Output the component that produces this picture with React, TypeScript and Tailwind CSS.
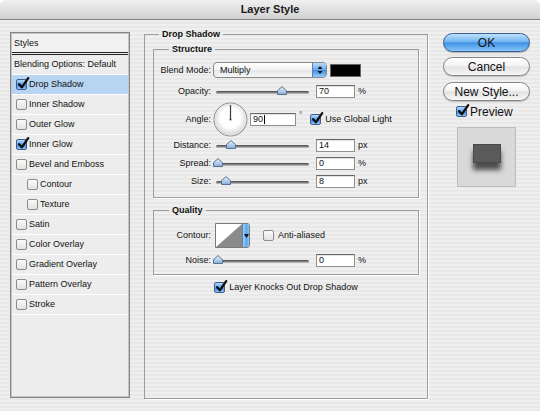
import React from 'react';

function Box({ checked }: { checked?: boolean }) {
  if (checked) {
    return (
      <span className="relative inline-block w-[11px] h-[11px] rounded-[2px] border border-[#3c5f8e] bg-[linear-gradient(#b4d8fa,#5ea4ec_50%,#3b86e3_52%,#8cc6f8)] shrink-0">
        <svg className="absolute left-[0px] top-[-3px]" width="13" height="13" viewBox="0 0 13 13">
          <path d="M2.2 7.2 L4.8 10.3 L11.2 1.2" fill="none" stroke="#0d0d0d" strokeWidth="2.3" strokeLinecap="round" strokeLinejoin="round" />
        </svg>
      </span>
    );
  }
  return <span className="inline-block w-[11px] h-[11px] rounded-[2px] border border-[#8c8c8c] bg-[linear-gradient(#fbfbfb,#e2e2e2)] shrink-0" />;
}

function Slider({ pos }: { pos: number }) {
  return (
    <div className="relative w-[98px] h-[11px] ml-[2px] shrink-0">
      <div className="absolute left-[3px] right-[2px] top-[5px] h-[3px] rounded-full bg-[linear-gradient(#474747,#8a8a8a_60%,#cfcfcf)]" />
      <svg className="absolute top-[0px]" style={{ left: pos }} width="10" height="9" viewBox="0 0 10 9">
        <defs>
          <linearGradient id="thumbg" x1="0" y1="0" x2="0" y2="1">
            <stop offset="0" stopColor="#eef5fd" />
            <stop offset="1" stopColor="#86acd8" />
          </linearGradient>
        </defs>
        <path d="M0.5 8.5 V4.6 L5 0.6 L9.5 4.6 V8.5 Z" fill="url(#thumbg)" stroke="#56708f" strokeWidth="1" />
      </svg>
    </div>
  );
}

function Field({ children, className }: { children?: React.ReactNode; className: string }) {
  return (
    <div className={`h-[13px] bg-white border border-[#8f8f8f] border-t-[#666] shadow-[inset_0_1px_1px_rgba(0,0,0,0.12)] pl-[2px] flex items-center text-[9px] leading-none shrink-0 ${className}`}>
      {children}
    </div>
  );
}

function Label({ children }: { children: React.ReactNode }) {
  return <span className="w-[57px] text-right shrink-0 text-[9px] leading-none">{children}</span>;
}

const items: { label: string; checked?: boolean; selected?: boolean; indent?: boolean }[] = [
  { label: 'Drop Shadow', checked: true, selected: true },
  { label: 'Inner Shadow' },
  { label: 'Outer Glow' },
  { label: 'Inner Glow', checked: true },
  { label: 'Bevel and Emboss' },
  { label: 'Contour', indent: true },
  { label: 'Texture', indent: true },
  { label: 'Satin' },
  { label: 'Color Overlay' },
  { label: 'Gradient Overlay' },
  { label: 'Pattern Overlay' },
  { label: 'Stroke' },
];

function Dial() {
  return (
    <svg width="35" height="35" viewBox="0 0 35 35" className="shrink-0 ml-[2px]">
      <defs>
        <radialGradient id="dialg" cx="0.5" cy="0.45" r="0.55">
          <stop offset="0.55" stopColor="#ffffff" />
          <stop offset="1" stopColor="#cfcfcf" />
        </radialGradient>
      </defs>
      <circle cx="17.5" cy="17.5" r="16.5" fill="url(#dialg)" stroke="#8c8c8c" strokeWidth="1" />
      <circle cx="17.5" cy="17.5" r="15.5" fill="none" stroke="#e8e8e8" strokeWidth="0.8" />
      <line x1="17.5" y1="17.5" x2="17.5" y2="3" stroke="#3a3a3a" strokeWidth="1.2" />
      <circle cx="17.5" cy="17.5" r="1" fill="#3a3a3a" />
    </svg>
  );
}

export default function App() {
  return (
    <div className="w-[540px] h-[411px] bg-white flex flex-col text-[#111] font-['Liberation_Sans',Arial,sans-serif] overflow-hidden">
      {/* Title bar */}
      <div className="h-[20px] shrink-0 rounded-t-[6px] border-b border-[#7f7f7f] bg-[linear-gradient(#efefef,#d2d2d2)] flex items-center justify-center">
        <span className="text-[11px] font-bold leading-none text-[#1a1a1a]">Layer Style</span>
      </div>

      {/* Body */}
      <div className="flex-1 flex items-start bg-[image:repeating-linear-gradient(180deg,#efefef_0px,#efefef_2px,#e8e8e8_2px,#e8e8e8_4px)]">
        {/* Left list */}
        <div className="ml-[10px] mt-[12px] w-[120px] h-[366px] border border-[#858585] bg-[#c4c4c4] p-[1px] shrink-0">
          <div className="h-full bg-[#ededed] flex flex-col">
            <div className="h-[21px] border-b-[3px] border-double border-[#222] bg-[#f1f1f1] flex items-center pl-[2px] text-[9px] leading-none">
              Styles
            </div>
            <div className="h-[20px] border-b border-white flex items-center pl-[2px] text-[9px] leading-none">
              Blending Options: Default
            </div>
            {items.map((it) => (
              <div
                key={it.label}
                className={`h-[20px] border-b border-white flex items-center gap-[2px] text-[9px] leading-none ${it.indent ? 'pl-[15px]' : 'pl-[4px]'} ${it.selected ? 'bg-[#b7d4f3]' : ''}`}
              >
                <Box checked={it.checked} />
                <span>{it.label}</span>
              </div>
            ))}
          </div>
        </div>

        {/* Middle */}
        <fieldset className="ml-[14px] mt-[8px] w-[284px] h-[371px] border border-[#9c9c9c] px-[8px] shrink-0 shadow-[1px_1px_0_0_#ffffff]">
          <legend className="ml-[6px] px-[3px] font-bold text-[9px] leading-[12px]">Drop Shadow</legend>
          <div className="flex flex-col">
            {/* Structure */}
            <fieldset className="mt-[3px] h-[155px] border border-[#9c9c9c] shadow-[1px_1px_0_0_#ffffff]">
              <legend className="ml-[15px] px-[3px] font-bold text-[9px] leading-[12px]">Structure</legend>
              <div className="flex flex-col">
                <div className="mt-[7px] h-[16px] flex items-center">
                  <Label>Blend Mode:</Label>
                  <div className="ml-[2px] w-[114px] h-[16px] rounded-[4px] border border-[#888] bg-[linear-gradient(#ffffff,#f3f3f3_50%,#e6e6e6_52%,#f7f7f7)] flex items-center overflow-hidden shrink-0">
                    <span className="flex-1 pl-[6px] text-[9px] leading-none">Multiply</span>
                    <div className="w-[14px] h-full border-l border-[#5c7ea8] bg-[linear-gradient(#b9dcfb,#64aaee_50%,#3f8ce4_52%,#93cdf9)] flex items-center justify-center">
                      <svg width="6" height="10" viewBox="0 0 6 10">
                        <path d="M0.5 4 L3 1 L5.5 4 Z" fill="#111" />
                        <path d="M0.5 6 L3 9 L5.5 6 Z" fill="#111" />
                      </svg>
                    </div>
                  </div>
                  <div className="ml-[3px] w-[31px] h-[13px] bg-black border border-[#666] shrink-0" />
                </div>

                <div className="mt-[6px] h-[15px] flex items-center">
                  <Label>Opacity:</Label>
                  <Slider pos={64} />
                  <Field className="ml-[5px] w-[39px]">70</Field>
                  <span className="ml-[3px] text-[9px] leading-none">%</span>
                </div>

                <div className="mt-[3px] h-[34px] flex items-center">
                  <Label>Angle:</Label>
                  <Dial />
                  <Field className="ml-[2px] w-[46px]">
                    <span>90</span>
                    <span className="ml-[1px] w-[1px] h-[9px] bg-black" />
                  </Field>
                  <span className="self-start mt-[9px] ml-[3px] text-[8px] leading-none">°</span>
                  <span className="ml-[8px] flex items-center gap-[4px]">
                    <Box checked />
                    <span className="text-[9px] leading-none">Use Global Light</span>
                  </span>
                </div>

                <div className="mt-[3px] h-[13px] flex items-center">
                  <Label>Distance:</Label>
                  <Slider pos={13} />
                  <Field className="ml-[5px] w-[39px]">14</Field>
                  <span className="ml-[3px] text-[9px] leading-none">px</span>
                </div>

                <div className="mt-[5px] h-[13px] flex items-center">
                  <Label>Spread:</Label>
                  <Slider pos={0} />
                  <Field className="ml-[5px] w-[39px]">0</Field>
                  <span className="ml-[3px] text-[9px] leading-none">%</span>
                </div>

                <div className="mt-[5px] h-[13px] flex items-center">
                  <Label>Size:</Label>
                  <Slider pos={8} />
                  <Field className="ml-[5px] w-[39px]">8</Field>
                  <span className="ml-[3px] text-[9px] leading-none">px</span>
                </div>
              </div>
            </fieldset>

            {/* Quality */}
            <fieldset className="mt-[6px] h-[71px] border border-[#9c9c9c] shadow-[1px_1px_0_0_#ffffff]">
              <legend className="ml-[15px] px-[3px] font-bold text-[9px] leading-[12px]">Quality</legend>
              <div className="flex flex-col">
                <div className="mt-[7px] h-[25px] flex items-center">
                  <Label>Contour:</Label>
                  <div className="ml-[4px] w-[35px] h-[25px] border border-[#7a7a7a] rounded-r-[3px] flex overflow-hidden shrink-0">
                    <svg width="26" height="23" viewBox="0 0 26 23" className="bg-white shrink-0">
                      <polygon points="0,23 26,0 26,23" fill="#8a8a8a" />
                    </svg>
                    <div className="flex-1 border-l border-[#5c7ea8] bg-[linear-gradient(90deg,#9fd0fa,#5aa6ee_60%,#8cc8f8)] flex items-center justify-center">
                      <svg width="5" height="4" viewBox="0 0 5 4">
                        <path d="M0 0 L5 0 L2.5 4 Z" fill="#111" />
                      </svg>
                    </div>
                  </div>
                  <span className="ml-[13px] flex items-center gap-[4px]">
                    <Box />
                    <span className="text-[9px] leading-none">Anti-aliased</span>
                  </span>
                </div>
                <div className="mt-[6px] h-[13px] flex items-center">
                  <Label>Noise:</Label>
                  <Slider pos={0} />
                  <Field className="ml-[5px] w-[39px]">0</Field>
                  <span className="ml-[3px] text-[9px] leading-none">%</span>
                </div>
              </div>
            </fieldset>

            <div className="mt-[7px] h-[11px] flex items-center justify-center gap-[4px]">
              <Box checked />
              <span className="text-[9px] leading-none">Layer Knocks Out Drop Shadow</span>
            </div>
          </div>
        </fieldset>

        {/* Right column */}
        <div className="ml-[15px] mt-[13px] w-[87px] flex flex-col shrink-0">
          <div className="h-[19px] rounded-full border border-[#3b5f92] bg-[linear-gradient(#bfe0fc,#72b6f3_45%,#3f90e6_52%,#86c6f9)] shadow-[0_1px_1px_rgba(0,0,0,0.25)] flex items-center justify-center text-[12px] leading-none">
            OK
          </div>
          <div className="mt-[5px] h-[19px] rounded-full border border-[#858585] bg-[linear-gradient(#ffffff,#f4f4f4_45%,#e2e2e2_52%,#f7f7f7)] shadow-[0_1px_1px_rgba(0,0,0,0.2)] flex items-center justify-center text-[12px] leading-none">
            Cancel
          </div>
          <div className="mt-[6px] h-[19px] rounded-full border border-[#858585] bg-[linear-gradient(#ffffff,#f4f4f4_45%,#e2e2e2_52%,#f7f7f7)] shadow-[0_1px_1px_rgba(0,0,0,0.2)] flex items-center justify-center text-[12px] leading-none">
            New Style...
          </div>
          <div className="mt-[5px] ml-[13px] h-[11px] flex items-center gap-[3px]">
            <Box checked />
            <span className="text-[12px] leading-none">Preview</span>
          </div>
          <div className="mt-[10px] ml-[14px] w-[59px] h-[60px] border border-[#bdbdbd] bg-[#d9d9d9] flex justify-center pt-[16px]">
            <div className="w-[28px] h-[19px] bg-[#5a5a5a] border border-[#4a4a4a] shadow-[0_7px_5px_rgba(0,0,0,0.65)]" />
          </div>
        </div>
      </div>
    </div>
  );
}
